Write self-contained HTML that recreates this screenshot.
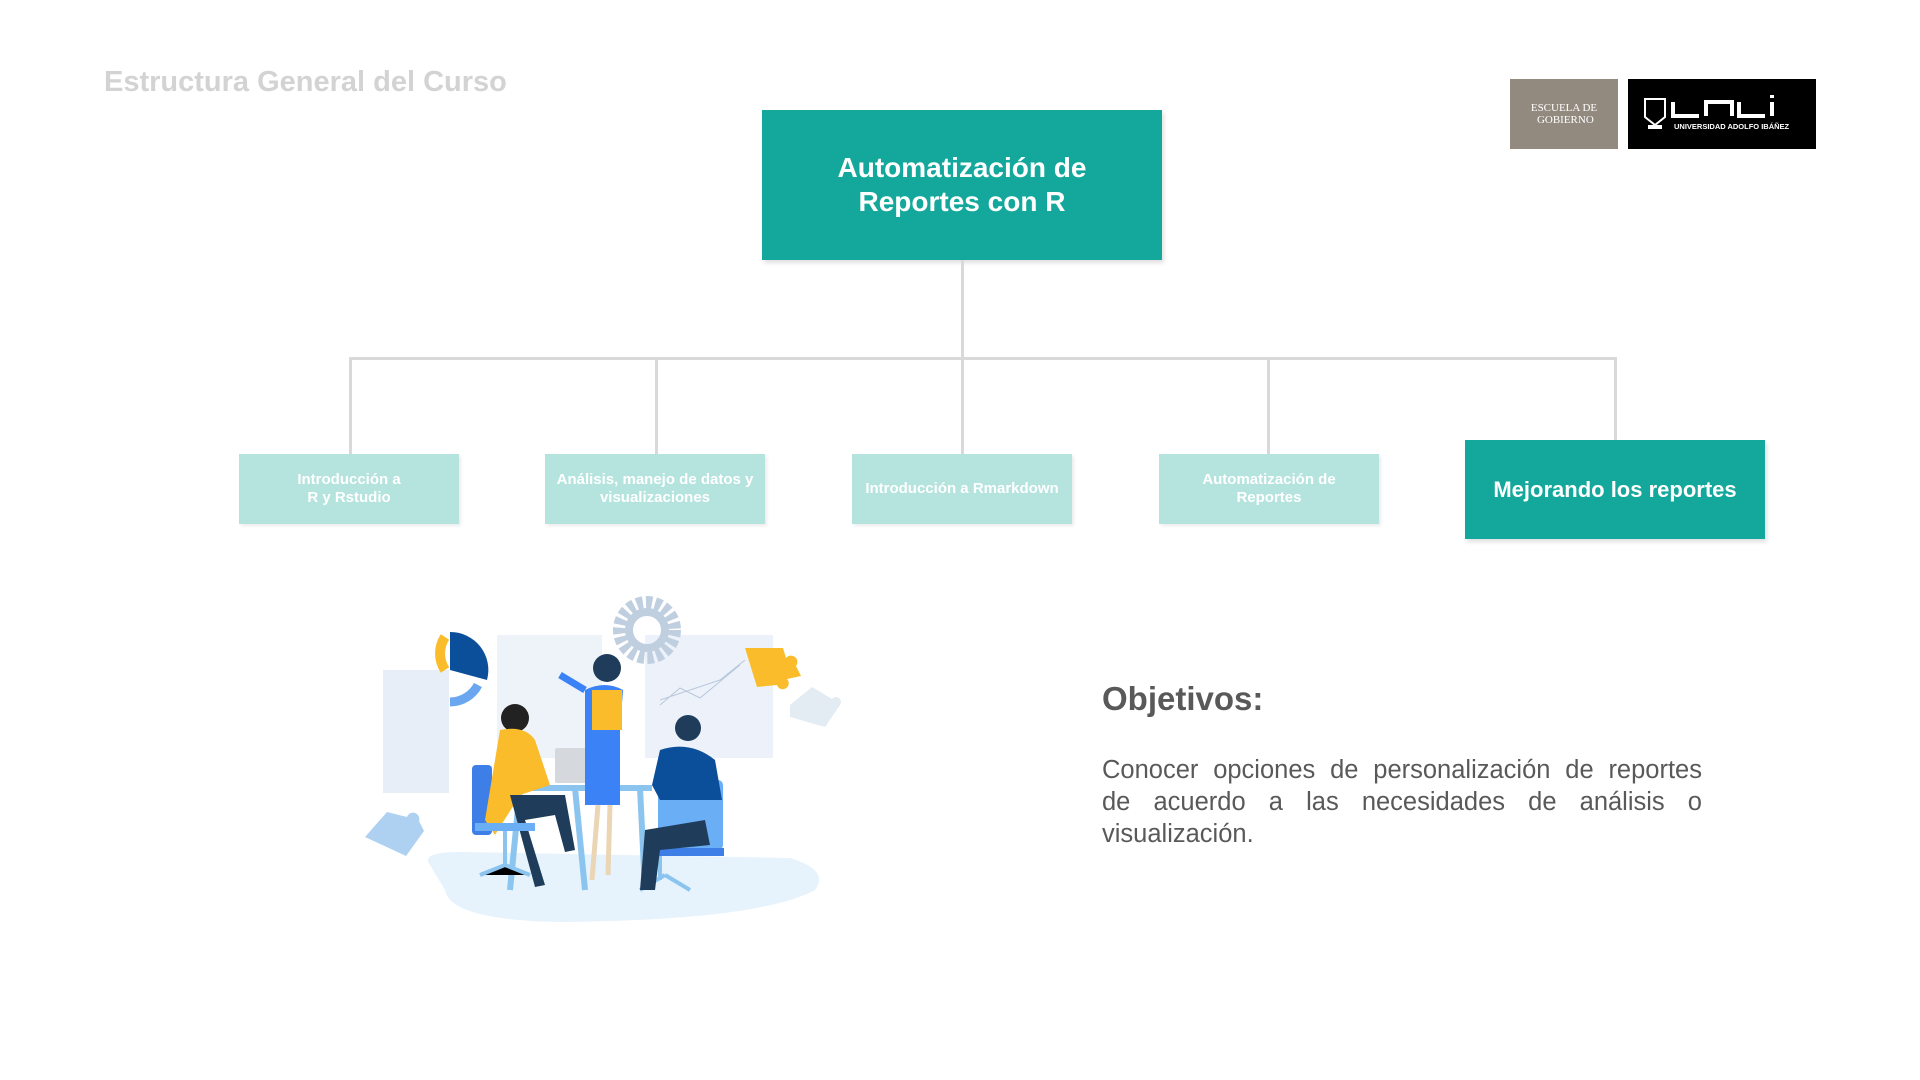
<!DOCTYPE html>
<html><head><meta charset="utf-8"><style>
body{margin:0;width:1920px;height:1080px;background:#fff;position:relative;overflow:hidden;font-family:"Liberation Sans",Arial,sans-serif}
.a{position:absolute}
.line{position:absolute;background:#d9d9d9}
.sb{position:absolute;top:454px;width:220px;height:70px;background:#b5e4df;color:#fff;font-weight:bold;font-size:15px;display:flex;align-items:center;justify-content:center;text-align:center;line-height:18px;box-shadow:2px 2px 3px rgba(0,0,0,.08)}
.j{text-align:justify;text-align-last:justify}
</style></head><body>
<div class="a" style="left:104px;top:66px;font-size:29px;font-weight:bold;color:#d3d3d3">Estructura General del Curso</div>
<div class="a" style="left:1510px;top:79px;width:108px;height:70px;background:#928a7f;color:#fff;font-family:'Liberation Serif',serif;font-size:11px;line-height:12px;text-align:center;display:flex;align-items:center;justify-content:center">ESCUELA DE<br>&nbsp;GOBIERNO</div>
<div class="a" style="left:1628px;top:79px;width:188px;height:70px;background:#000"></div>
<svg class="a" style="left:1628px;top:79px" width="188" height="70" viewBox="0 0 188 70">
<path d="M17 20h20v18l-10 8-10-8z" fill="none" stroke="#fff" stroke-width="2"/><rect x="20" y="46" width="14" height="4" fill="#fff"/>
<path d="M45 23v14h26M78 37v-14h26v14M111 23v14h26M144 23v14M144 16v3" fill="none" stroke="#fff" stroke-width="4"/>
<text x="46" y="50" fill="#fff" font-size="7.5" font-weight="bold" font-family="Liberation Sans">UNIVERSIDAD ADOLFO IBÁÑEZ</text></svg>
<div class="a" style="left:762px;top:110px;width:400px;height:150px;background:#14a89c;color:#fff;font-weight:bold;font-size:28px;line-height:34px;display:flex;align-items:center;justify-content:center;text-align:center;box-shadow:2px 3px 4px rgba(0,0,0,.12)">Automatización de<br>Reportes con R</div>
<div class="line" style="left:961px;top:260px;width:3px;height:100px"></div>
<div class="line" style="left:349px;top:357px;width:1268px;height:3px"></div>
<div class="line" style="left:349px;top:357px;width:3px;height:97px"></div>
<div class="line" style="left:655px;top:357px;width:3px;height:97px"></div>
<div class="line" style="left:961px;top:357px;width:3px;height:97px"></div>
<div class="line" style="left:1267px;top:357px;width:3px;height:97px"></div>
<div class="line" style="left:1614px;top:357px;width:3px;height:83px"></div>
<div class="sb" style="left:239px">Introducción a<br>R y Rstudio</div>
<div class="sb" style="left:545px">Análisis, manejo de datos y<br>visualizaciones</div>
<div class="sb" style="left:852px">Introducción a Rmarkdown</div>
<div class="sb" style="left:1159px">Automatización de<br>Reportes</div>
<div class="a" style="left:1465px;top:440px;width:300px;height:99px;background:#14a89c;color:#fff;font-weight:bold;font-size:22px;display:flex;align-items:center;justify-content:center;box-shadow:2px 3px 4px rgba(0,0,0,.12)">Mejorando los reportes</div>
<div class="a" style="left:1102px;top:680px;font-size:33px;font-weight:bold;color:#595959">Objetivos:</div>
<div class="a" style="left:1102px;top:754px;width:600px;font-size:25.5px;line-height:32px;color:#595959">
<div class="j">Conocer opciones de personalización de reportes</div>
<div class="j">de acuerdo a las necesidades de análisis o</div>
<div>visualización.</div></div>
<svg class="a" style="left:360px;top:590px" width="510" height="345" viewBox="0 0 510 345">
<path d="M70 275 Q60 262 100 262 L430 268 Q470 280 455 300 Q400 330 200 332 Q90 330 85 300 Z" fill="#e6f2fc"/>
<rect x="23" y="80" width="66" height="123" fill="#e8eef7"/>
<rect x="137" y="45" width="105" height="123" fill="#eef3fa"/>
<rect x="285" y="45" width="128" height="123" fill="#edf2fa"/>
<circle cx="287" cy="40" r="27" fill="none" stroke="#c0cfe0" stroke-width="14" stroke-dasharray="6 3"/>
<circle cx="287" cy="40" r="18" fill="none" stroke="#c0cfe0" stroke-width="8"/>
<path d="M90 80 A30 30 0 0 1 90 47" fill="none" stroke="#fbbc2c" stroke-width="10" transform="translate(-5 0)"/>
<path d="M90 42 A38 38 0 0 1 127 90 L90 80Z" fill="#0b4f9a"/>
<path d="M90 112 A32 32 0 0 0 118 95" fill="none" stroke="#6aa7f0" stroke-width="9"/>
<path d="M300 115 L320 98 L340 108 L380 75 M300 110 L330 100 L360 90 L385 70" stroke="#b9c7dc" fill="none"/>
<path d="M385 58h38l3 10a6 6 0 1 1 10 8l5 10-14 3a6 6 0 1 1-10 6l-20 2z" fill="#fbbc2c"/>
<path d="M430 115l22-18 20 12a5 5 0 1 1 8 6l-15 22-35-10z" fill="#e3ebf3"/>
<path d="M5 247l22-25 20 5a6 6 0 1 1 12 4l5 10-18 25z" fill="#aed1f2"/>
<rect x="112" y="175" width="20" height="70" rx="4" fill="#3d7fe6"/>
<rect x="298" y="190" width="65" height="70" rx="5" fill="#6aaef6"/>
<rect x="292" y="258" width="72" height="8" fill="#3d7fe6"/>
<path d="M150 300 L160 198 M225 300 L215 198 M285 300 L280 198" stroke="#8cc4f0" stroke-width="6"/>
<rect x="155" y="195" width="137" height="6" fill="#8cc4f0"/>
<rect x="195" y="158" width="53" height="35" rx="2" fill="#d5d8dc"/>
<path d="M225 100 Q245 90 263 100 L260 140 L260 215 L225 215 Z" fill="#3b82f6"/>
<rect x="232" y="100" width="30" height="40" fill="#fbbc2c"/>
<circle cx="247" cy="78" r="14" fill="#1f3d5a"/>
<path d="M225 100 L200 85" stroke="#3b82f6" stroke-width="7"/>
<path d="M238 215 L232 290 M250 215 L248 285" stroke="#ead5b5" stroke-width="5"/>
<circle cx="155" cy="128" r="14" fill="#222"/>
<path d="M140 140 Q165 135 175 150 L190 195 L160 205 L135 245 L125 230 Z" fill="#fbbc2c"/>
<path d="M150 205 L205 205 L215 260 L205 262 L195 225 L165 230 L185 295 L175 297 Z" fill="#1f3d5a"/>
<rect x="115" y="233" width="60" height="8" fill="#6aaef6"/>
<path d="M145 241 V275 M120 285 L145 275 L170 285 M300 266 V290 M305 285 L280 300 M305 285 L330 300" stroke="#8cc4f0" stroke-width="4"/>
<circle cx="328" cy="138" r="13" fill="#1f3d5a"/>
<path d="M300 160 Q330 150 355 170 L362 210 L300 210 L292 195 Z" fill="#0b4f9a"/>
<path d="M285 240 L345 230 L350 255 L300 260 L295 300 L280 300 Z" fill="#1f3d5a"/>
</svg>
</body></html>
